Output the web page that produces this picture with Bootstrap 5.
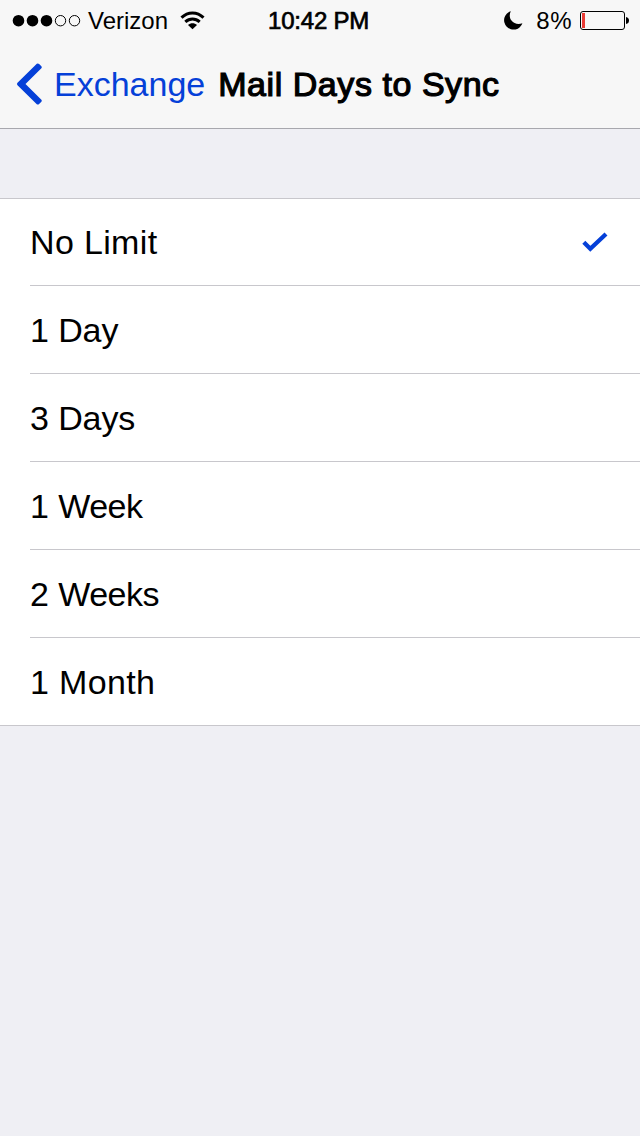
<!DOCTYPE html>
<html lang="en">
<head>
<meta charset="utf-8">
<meta name="viewport" content="width=device-width, initial-scale=1">
<title>Mail Days to Sync</title>
<link href="https://cdn.jsdelivr.net/npm/bootstrap@5.3.0/dist/css/bootstrap.min.css" rel="stylesheet">
<style>
  body { background: #efeff4; color: #000; font-family: "Liberation Sans", Arial, sans-serif; font-size: 34px; line-height: 40px; }
  svg { display: block; flex: none; }
  .top-bar { height: 129px; background: #f7f7f7; border-bottom: 1px solid #a8a8ae; }
  .status { height: 41px; padding: 0 11px 0 12px; font-size: 24px; line-height: 41px; }
  .status-side { width: 256px; }
  .carrier { margin: 0 12px 0 7px; letter-spacing: 0; }
  .clock { -webkit-text-stroke: .7px #000; width: 105px; letter-spacing: -.2px; }
  .charge { margin: 0 8px 0 13px; letter-spacing: .5px; }
  .title-row { height: 85px; padding: 0 16px; }
  .back-link { color: #0540d8; gap: 11px; letter-spacing: 0; }
  .heading { font-size: 34px; line-height: 40px; font-weight: 400; margin: 0 0 0 13px; -webkit-text-stroke: 1.2px #000; letter-spacing: .55px; }
  .options { --bs-list-group-bg: #fff; margin-top: 69px; background: #fff; border: solid #c8c7cc; border-width: 1px 0; }
  .option { height: 88px; margin-left: 30px; padding: 0 32px 0 0; border: 0; border-bottom: 1px solid #c8c7cc; color: #000; }
  .option:first-child { height: 87px; letter-spacing: .35px; }
  .option:last-child { height: 87px; border-bottom: 0; letter-spacing: .35px; }
  .weeks { letter-spacing: -.5px; word-spacing: .8px; }
  .days { letter-spacing: -.1px; }
</style>
</head>
<body>
<header class="top-bar">
  <div class="status d-flex justify-content-between">
    <div class="status-side d-flex align-items-center">
      <svg width="69" height="14" viewBox="12 14 69 14" aria-label="Signal">
        <circle cx="18.5" cy="20.7" r="5.8"/><circle cx="32.5" cy="20.7" r="5.8"/><circle cx="46.5" cy="20.7" r="5.8"/>
        <g fill="none" stroke="#000" stroke-width="1"><circle cx="60.5" cy="20.7" r="5.2"/><circle cx="74.5" cy="20.7" r="5.2"/></g>
      </svg>
      <span class="carrier">Verizon</span>
      <svg width="26" height="19" viewBox="0 0 26 19" aria-label="Wi-Fi">
        <g fill="none" stroke="#000" stroke-width="3"><path d="M1.500 6.600C7.800 .3 17.200 .3 23.500 6.600"/><path d="M5.300 10.900C9.600 7 15.400 7 19.700 10.900"/></g>
        <path d="M8 14C10.600 11.700 14.400 11.700 17 14L12.500 18.300Z"/>
      </svg>
    </div>
    <span class="clock text-nowrap">10:42 PM</span>
    <div class="status-side d-flex align-items-center justify-content-end">
      <svg width="19" height="19" viewBox="0 0 19 19" aria-label="Do not disturb">
        <path d="M6.800 .2A9.400 9.400 0 1 0 18.400 12.200C14.500 13.900 10 12.900 7.500 9.600C5.300 6.700 5.300 3.200 6.800 .2Z"/>
      </svg>
      <span class="charge">8%</span>
      <svg width="49" height="19" viewBox="0 0 49 19" aria-label="Battery">
        <rect x=".5" y=".5" width="44" height="18" rx="2.500" fill="none" stroke="#000"/>
        <rect x="2" y="2" width="3" height="15" fill="#e93b35"/>
        <path d="M46 6Q49 6.500 49 9.500T46 13Z"/>
      </svg>
    </div>
  </div>
  <nav class="title-row d-flex align-items-center">
    <a class="back-link d-flex align-items-center text-decoration-none" href="#">
      <svg width="27" height="42" viewBox="0 0 27 42" aria-hidden="true"><path d="M1.500 19.700L20.800 .8Q22 0 23.100 1L25.400 3.300Q26.300 4.300 25.400 5.200L9.500 21L25.400 36.800Q26.300 37.700 25.400 38.700L23.100 41Q22 42 20.800 41.200L1.500 22.300Q.3 21 1.500 19.700Z" fill="#0540d8"/></svg>
      <span>Exchange</span>
    </a>
    <h1 class="heading text-nowrap">Mail Days to Sync</h1>
  </nav>
</header>
<main>
  <ul class="options list-group list-group-flush rounded-0">
    <li class="option list-group-item d-flex align-items-center justify-content-between">No Limit
      <svg width="27" height="20" viewBox="0 0 27 20" aria-label="Selected"><path d="M2.800 10.300L9.300 16.700L25 2" fill="none" stroke="#0540d8" stroke-width="4.300"/></svg>
    </li>
    <li class="option days list-group-item d-flex align-items-center">1 Day</li>
    <li class="option days list-group-item d-flex align-items-center">3 Days</li>
    <li class="option weeks list-group-item d-flex align-items-center">1 Week</li>
    <li class="option weeks list-group-item d-flex align-items-center">2 Weeks</li>
    <li class="option list-group-item d-flex align-items-center">1 Month</li>
  </ul>
</main>
<script src="https://cdn.jsdelivr.net/npm/bootstrap@5.3.0/dist/js/bootstrap.bundle.min.js"></script>
</body>
</html>
